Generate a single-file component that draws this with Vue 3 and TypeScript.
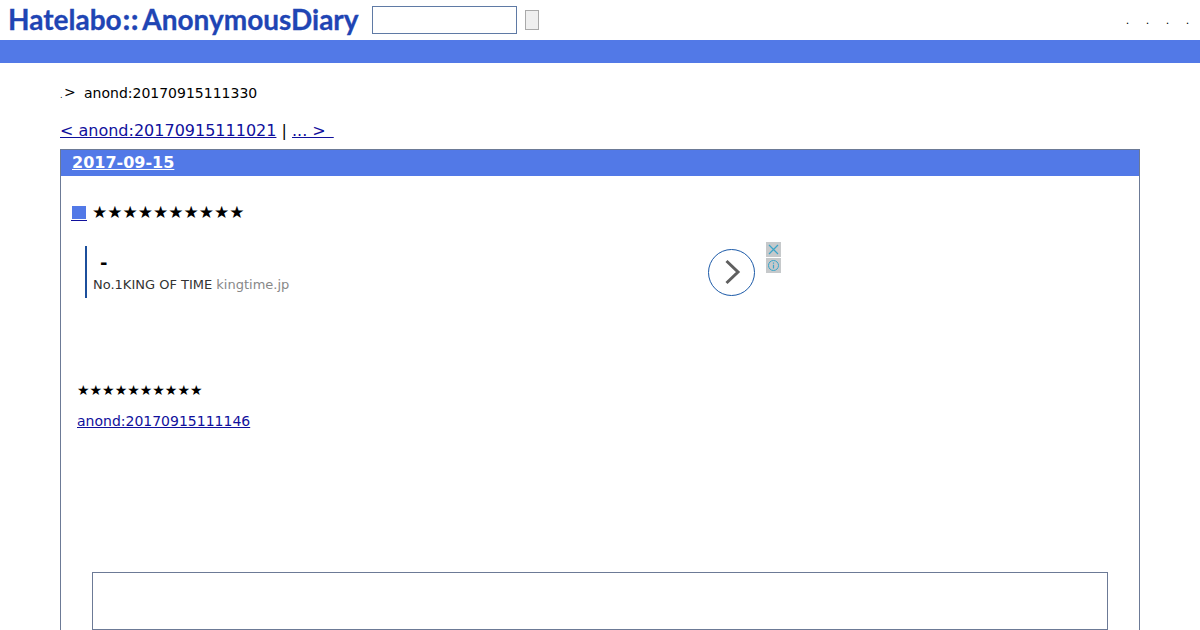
<script setup lang="ts">
const dots = [0, 1, 2, 3]
const heading = '★★★★★★★★★★'
</script>

<template>
  <div class="page">
    <header class="top">
      <a class="logo">Hatelabo<b>::</b><span>AnonymousDiary</span></a>
      <input class="search" type="text" />
      <button class="go" type="button"></button>
      <ul class="menu">
        <li v-for="d in dots" :key="d">.</li>
      </ul>
    </header>
    <div class="band"></div>

    <main class="main">
      <div class="crumb"><span class="dot">.</span><span class="gt">&gt;</span><span>anond:20170915111330</span></div>
      <div class="pager">
        <a href="#">&lt; anond:20170915111021</a> | <a href="#">... &gt;&ensp;</a>
      </div>

      <section class="day">
        <h2 class="day-title"><a href="#">2017-09-15</a></h2>
        <div class="body">
          <h3 class="entry-title"><a class="mark" href="#"><i></i></a><span>{{ heading }}</span></h3>

          <div class="ad">
            <div class="ad-text">
              <div class="ad-head">-</div>
              <div class="ad-line">No.1KING OF TIME <span>kingtime.jp</span></div>
            </div>
            <div class="ad-go">
              <svg width="47" height="47" viewBox="0 0 47 47">
                <circle cx="23.5" cy="23.5" r="23" fill="#fff" stroke="#1c5aa8" stroke-width="1" />
                <path d="M18.5 12 L30 23 L18.5 34" fill="none" stroke="#5f5f5f" stroke-width="3" />
              </svg>
            </div>
            <div class="ad-flags">
              <svg width="15" height="15" viewBox="0 0 15 15">
                <rect width="15" height="15" fill="#c6c9cb" />
                <path d="M3 3 L12 12 M12 3 L3 12" stroke="#3aa5c9" stroke-width="1.2" />
              </svg>
              <svg width="15" height="15" viewBox="0 0 15 15">
                <rect width="15" height="15" fill="#c6c9cb" />
                <circle cx="7.5" cy="7.5" r="5" fill="none" stroke="#3aa5c9" stroke-width="1" />
                <path d="M7.5 4.5 V5.7 M7.5 6.7 V10.5" stroke="#3aa5c9" stroke-width="1.2" />
              </svg>
            </div>
          </div>

          <p class="stars">{{ heading }}</p>
          <p class="ref"><a href="#">anond:20170915111146</a></p>

          <div class="box"></div>
        </div>
      </section>
    </main>
  </div>
</template>

<style>
html,
body {
  margin: 0;
  background: #fff;
  overflow: hidden;
}
</style>

<style scoped>
.page {
  height: 630px;
  overflow: hidden;
  font-family: "DejaVu Sans", sans-serif;
  color: #000;
}

a {
  color: #10109c;
}

.top {
  display: flex;
  align-items: center;
  height: 40px;
  padding-left: 8px;
  box-sizing: border-box;
}

.logo {
  width: 364px;
  margin-top: -3px;
  font-family: Lato, sans-serif;
  font-size: 28px;
  font-weight: 700;
  color: #1f45b4;
  white-space: nowrap;
  -webkit-text-stroke: 0.3px #1f45b4;
}

.logo b {
  letter-spacing: 1px;
  margin-left: 1px;
}

.logo span {
  margin-left: 3px;
}

.search {
  width: 145px;
  height: 28px;
  box-sizing: border-box;
  margin: 0;
  padding: 0;
  border: 1px solid #5f7aa5;
  background: #fff;
}

.go {
  width: 14px;
  height: 20px;
  margin: 0 0 0 8px;
  padding: 0;
  border: 1px solid #a9a9a9;
  background: #efefef;
}

.menu {
  display: flex;
  gap: 13px;
  margin: 0 0 0 auto;
  padding: 0 9px 0 0;
  list-style: none;
  font-size: 11px;
  line-height: 14px;
}

.menu li {
  width: 7px;
  text-align: center;
  padding-top: 1px;
}

.band {
  height: 23px;
  background: #5279e7;
}

.main {
  padding: 0 60px;
}

.crumb {
  display: flex;
  align-items: baseline;
  height: 20px;
  margin-top: 20px;
  font-size: 14px;
  line-height: 20px;
}

.dot {
  width: 4px;
  font-size: 8px;
}

.gt {
  width: 20px;
  transform: translateY(-1px);
}

.pager {
  margin: 18px 0 9px;
  font-size: 16px;
  line-height: 19px;
  height: 19px;
}

.day {
  border: 1px solid #6c7a96;
  border-bottom: 0;
}

.day-title {
  margin: 0;
  padding: 0 11px;
  height: 26px;
  background: #5279e7;
  font-size: 16px;
  line-height: 26px;
}

.day-title a {
  color: #fff;
}

.body {
  padding: 0 16px;
}

.entry-title {
  display: flex;
  align-items: center;
  gap: 5px;
  margin: 0 0 0 -6px;
  padding-top: 25px;
  height: 22px;
  font-size: 17px;
  font-weight: 400;
  line-height: 22px;
}

.mark {
  display: block;
  width: 16px;
  height: 17px;
  border-bottom: 1px solid #10109c;
  box-sizing: border-box;
  padding: 2px 1px 0;
}

.mark i {
  display: block;
  width: 14px;
  height: 13px;
  background: #5279e7;
}

.ad {
  display: flex;
  align-items: flex-start;
  margin: 18px 0 0 8px;
  height: 140px;
}

.ad-text {
  width: 606px;
  height: 52px;
  margin-top: 5px;
  padding-left: 6px;
  box-sizing: border-box;
  border-left: 2px solid #1c4f9c;
}

.ad-head {
  padding: 7px 0 0 7px;
  height: 27px;
  box-sizing: border-box;
  font-size: 18px;
  font-weight: 700;
  line-height: 20px;
}

.ad-line {
  font-size: 13px;
  line-height: 16px;
  margin-top: 4px;
  color: #333;
}

.ad-line span {
  color: #888;
}

.ad-go {
  width: 47px;
  height: 47px;
  margin: 8px 0 0 17px;
}

.ad-go svg,
.ad-flags svg {
  display: block;
}

.ad-flags {
  margin: 1px 0 0 11px;
}

.ad-flags svg + svg {
  margin-top: 1px;
}

.stars {
  margin: 0;
  font-size: 14px;
  line-height: 18px;
}

.ref {
  margin: 13px 0 0;
  font-size: 14px;
  line-height: 18px;
}

.box {
  width: 1016px;
  height: 58px;
  box-sizing: border-box;
  margin: 142px 0 0 15px;
  border: 1px solid #6c7a96;
}
</style>
